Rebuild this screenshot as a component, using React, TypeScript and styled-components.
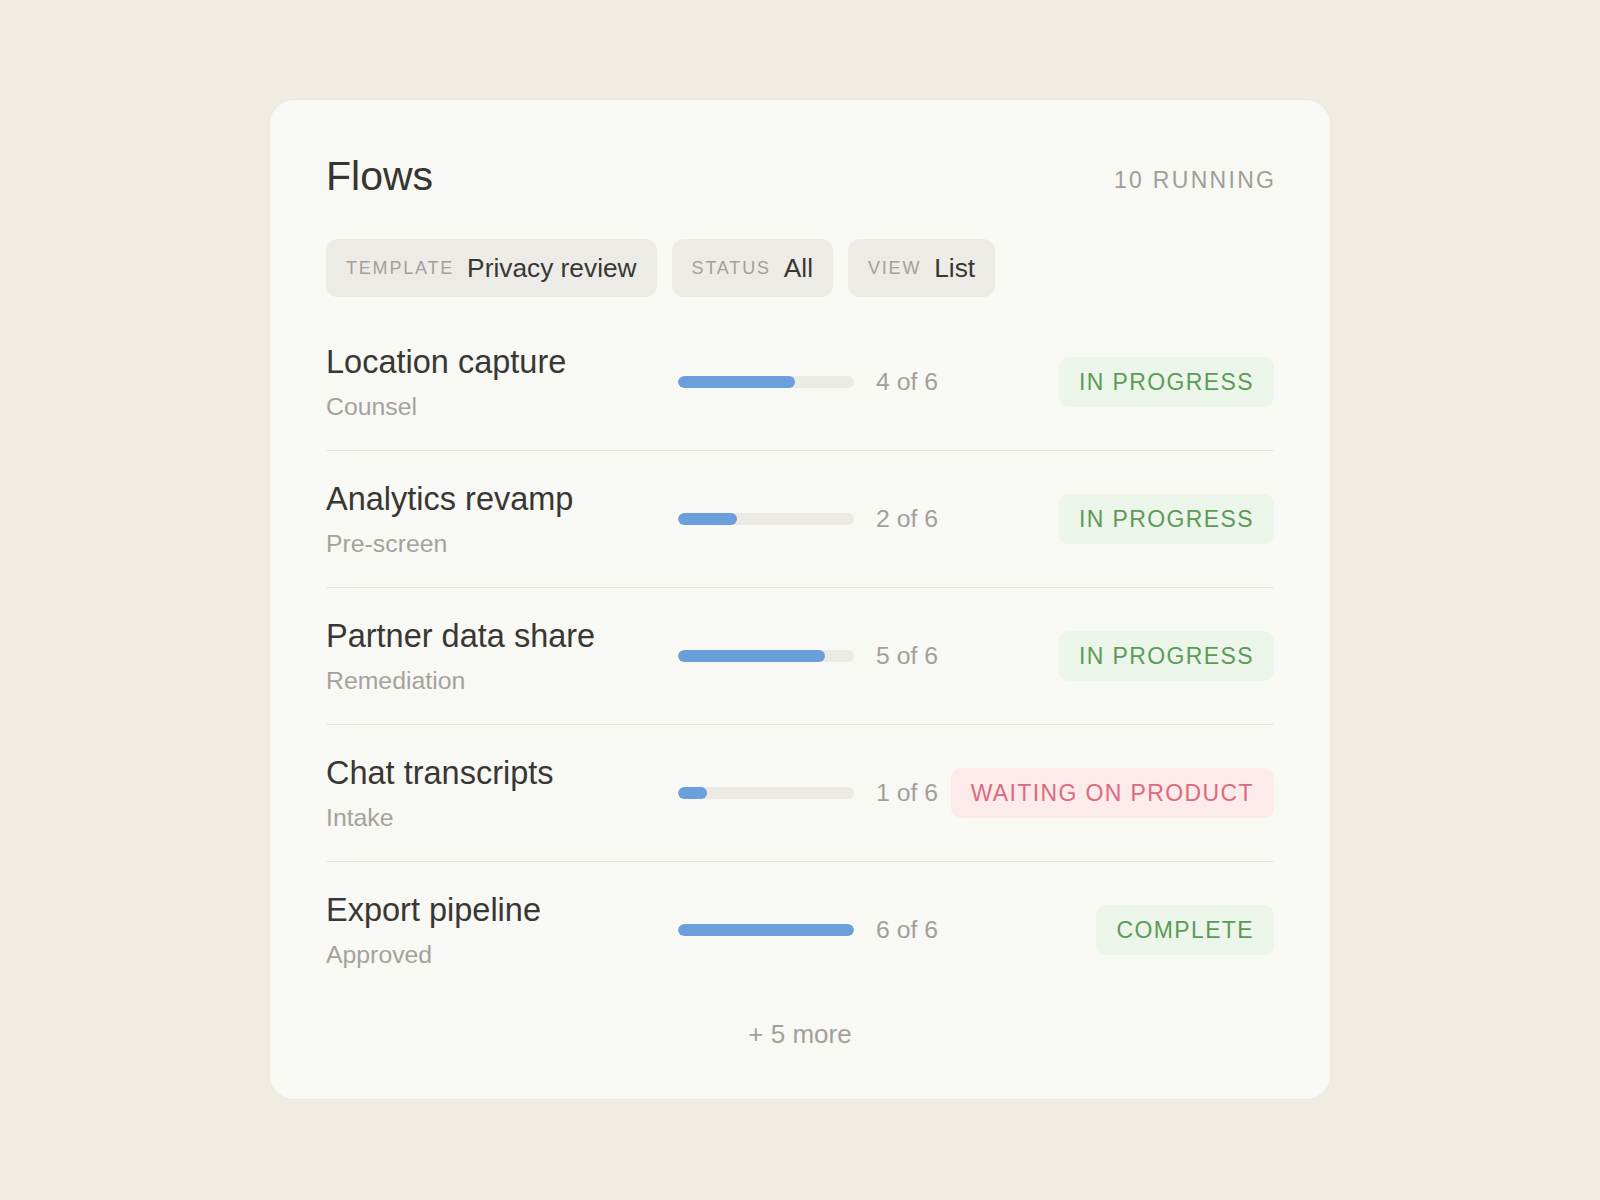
import styled, { createGlobalStyle } from "styled-components";

const GlobalStyle = createGlobalStyle`
  * { box-sizing: border-box; }
  body {
    margin: 0;
    background-color: #f1ece1;
    font-family: "Liberation Sans", Arial, sans-serif;
  }
`;

const StyledPage = styled.div`
  min-height: 100vh;
  padding-top: 100px;
`;

const StyledCard = styled.div`
  width: 1060px;
  margin: 0 auto;
  background-color: #f8f8f4;
  border-radius: 24px;
  padding: 56px 56px 49px;
  box-shadow: 0 0 0 1px rgba(0, 0, 0, 0.015);
`;

const StyledHeader = styled.div`
  display: flex;
  justify-content: space-between;
  align-items: baseline;
  margin-bottom: 43px;
`;

const StyledTitle = styled.h1`
  margin: 0;
  font-size: 41px;
  line-height: 40px;
  font-weight: 400;
  color: #363531;
`;

const StyledCount = styled.span`
  font-size: 23px;
  letter-spacing: 0.1em;
  margin-right: -0.1em;
  color: #a19e98;
  position: relative;
  top: -2px;
`;

const StyledFilters = styled.div`
  display: flex;
  gap: 15px;
  margin-bottom: 17px;
`;

const StyledPill = styled.div`
  display: flex;
  align-items: center;
  gap: 13px;
  height: 58px;
  padding: 0 20px;
  border-radius: 12px;
  background-color: #ecebe6;
`;

const StyledPillLabel = styled.span`
  font-size: 18px;
  letter-spacing: 0.1em;
  color: #a3a09b;
`;

const StyledPillValue = styled.span`
  font-size: 26.3px;
  color: #383733;
`;

const StyledRow = styled.div<{ $last?: boolean }>`
  display: flex;
  align-items: center;
  padding: 29px 0;
  border-bottom: ${({ $last }) => ($last ? "none" : "1px solid #e5e4df")};
`;

const StyledInfo = styled.div`
  flex: 0 0 352px;
  display: flex;
  flex-direction: column;
`;

const StyledName = styled.span`
  font-size: 32.5px;
  line-height: 38px;
  color: #383733;
`;

const StyledSub = styled.span`
  margin-top: 11px;
  font-size: 24.8px;
  line-height: 29px;
  color: #a5a29c;
`;

const StyledTrack = styled.div`
  flex: 0 0 176px;
  height: 12px;
  border-radius: 6px;
  background-color: #ebeae5;
  overflow: hidden;
`;

const StyledFill = styled.div`
  height: 100%;
  border-radius: 6px;
  background-color: #6b9fdc;
`;

const StyledSteps = styled.span`
  margin-left: 22px;
  width: 62px;
  font-size: 24.8px;
  color: #a3a09a;
  white-space: nowrap;
`;

const StyledBadge = styled.span<{ $tone: "green" | "red" }>`
  margin-left: auto;
  display: flex;
  align-items: center;
  height: 50px;
  padding: 0 20px;
  border-radius: 10px;
  font-size: 23px;
  letter-spacing: 0.06em;
  white-space: nowrap;
  background-color: ${({ $tone }) => ($tone === "red" ? "#fdeaea" : "#ecf5e9")};
  color: ${({ $tone }) => ($tone === "red" ? "#dc6a7e" : "#5e9a57")};
`;

const StyledMore = styled.div`
  margin-top: 21px;
  text-align: center;
  font-size: 26px;
  line-height: 1.2;
  color: #a3a09a;
`;

const flows = [
  { name: "Location capture", stage: "Counsel", done: 4, status: "IN PROGRESS" },
  { name: "Analytics revamp", stage: "Pre-screen", done: 2, status: "IN PROGRESS" },
  { name: "Partner data share", stage: "Remediation", done: 5, status: "IN PROGRESS" },
  { name: "Chat transcripts", stage: "Intake", done: 1, status: "WAITING ON PRODUCT" },
  { name: "Export pipeline", stage: "Approved", done: 6, status: "COMPLETE" },
];

const filters = [
  { label: "TEMPLATE", value: "Privacy review" },
  { label: "STATUS", value: "All" },
  { label: "VIEW", value: "List" },
];

const App = () => {
  return (
    <StyledPage>
      <GlobalStyle />
      <StyledCard>
        <StyledHeader>
          <StyledTitle>Flows</StyledTitle>
          <StyledCount>10 RUNNING</StyledCount>
        </StyledHeader>

        <StyledFilters>
          {filters.map((f) => (
            <StyledPill key={f.label}>
              <StyledPillLabel>{f.label}</StyledPillLabel>
              <StyledPillValue>{f.value}</StyledPillValue>
            </StyledPill>
          ))}
        </StyledFilters>

        {flows.map((flow, i) => (
          <StyledRow key={flow.name} $last={i === flows.length - 1}>
            <StyledInfo>
              <StyledName>{flow.name}</StyledName>
              <StyledSub>{flow.stage}</StyledSub>
            </StyledInfo>
            <StyledTrack>
              <StyledFill style={{ width: `${(flow.done / 6) * 100}%` }} />
            </StyledTrack>
            <StyledSteps>{flow.done} of 6</StyledSteps>
            <StyledBadge $tone={flow.status.startsWith("WAITING") ? "red" : "green"}>
              {flow.status}
            </StyledBadge>
          </StyledRow>
        ))}

        <StyledMore>+ 5 more</StyledMore>
      </StyledCard>
    </StyledPage>
  );
};

export default App;
